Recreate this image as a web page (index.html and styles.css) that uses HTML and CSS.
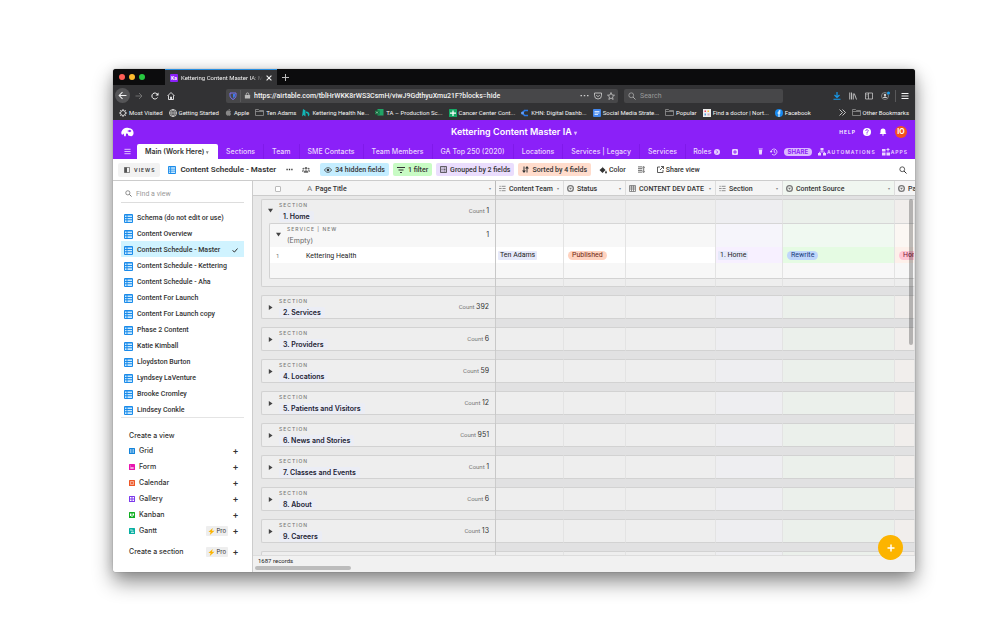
FILE: index.html
```html
<!DOCTYPE html>
<html lang="en">
<head>
<meta charset="utf-8">
<title>Kettering Content Master IA</title>
<link rel="stylesheet" href="styles.css">
</head>
<body>
<svg class="defs" aria-hidden="true">
<symbol id="grid" viewBox="0 0 18 18"><rect width="18" height="18" rx="2" fill="#1b8bea"/><path d="M2 3h3v3H2zM7 3h9v3H7zM2 8h3v2.500H2zM7 8h9v2.500H7zM2 12.500h3V16H2zM7 12.500h9V16H7z" fill="#c9eaff"/></symbol>
<symbol id="search" viewBox="0 0 16 16"><circle cx="6.500" cy="6.500" r="4.800" fill="none" stroke="currentColor" stroke-width="1.600"/><path d="M10 10l5 5" stroke="currentColor" stroke-width="2"/></symbol>
<symbol id="lines" viewBox="0 0 16 14"><path d="M1 2h3M6 2h9M0 7h6M8 7h7M1 12h3M6 12h9" stroke="currentColor" stroke-width="1.800"/></symbol>
<symbol id="select" viewBox="0 0 16 16"><circle cx="8" cy="8" r="6.500" fill="none" stroke="currentColor" stroke-width="3"/><path d="M4.500 6.500h7L8 11z" fill="currentColor"/></symbol>
<symbol id="folder" viewBox="0 0 18 16"><path d="M1 14V2h6l2 2h8v10zM1 6h16" fill="none" stroke="currentColor" stroke-width="1.500"/></symbol>
<symbol id="menu" viewBox="0 0 16 16"><path d="M1 3h14M1 8h14M1 13h14" stroke="currentColor" stroke-width="2"/></symbol>
<symbol id="right" viewBox="0 0 10 12"><path d="M1 0l9 6-9 6z" fill="currentColor"/></symbol>
<symbol id="down" viewBox="0 0 12 10"><path d="M0 1h12L6 10z" fill="currentColor"/></symbol>
<symbol id="bolt" viewBox="0 0 16 16"><path d="M11 0L1 9h5l-2 7L15 6H9z" fill="#fcb400"/></symbol>
</svg>
<div class="window">
  <header class="chrome">
    <div class="tabstrip">
      <div class="lights"><i class="red"></i><i class="yellow"></i><i class="green"></i></div>
      <div class="browser-tab"><b class="favicon">Ka</b><span class="tab-title">Kettering Content Master IA: M</span><button aria-label="Close tab"><svg viewBox="0 0 10 10" class="s6"><path d="M1 1l8 8M9 1L1 9" stroke="currentColor" stroke-width="1.800"/></svg></button></div>
      <button class="newtab" aria-label="New tab"><svg viewBox="0 0 10 10" class="s7"><path d="M5 0v10M0 5h10" stroke="currentColor" stroke-width="1.500"/></svg></button>
    </div>
    <div class="navbar">
      <div class="navbuttons">
        <button class="back" aria-label="Back"><svg class="s9" viewBox="0 0 16 16"><path d="M15 8H2M8 2L2 8l6 6" fill="none" stroke="currentColor" stroke-width="1.800"/></svg></button>
        <button class="dim" aria-label="Forward"><svg class="s8" viewBox="0 0 16 16"><path d="M1 8h13M8 2l6 6-6 6" fill="none" stroke="currentColor" stroke-width="1.800"/></svg></button>
        <button aria-label="Reload"><svg class="s8" viewBox="0 0 16 16"><path d="M13 11a6 6 0 1 1 0-6" fill="none" stroke="currentColor" stroke-width="2"/><path d="M15 1v6H9z" fill="currentColor"/></svg></button>
        <button aria-label="Home"><svg class="s8" viewBox="0 0 16 16"><path d="M1 8l7-7 7 7M3 7v8h10V7M7 15v-5h2v5" fill="none" stroke="currentColor" stroke-width="1.700"/></svg></button>
      </div>
      <div class="urlbar">
        <svg class="s8" viewBox="0 0 16 16"><path d="M2 2h12v5c0 4-3 6-6 8-3-2-6-4-6-8z" fill="none" stroke="#7a72f5" stroke-width="2"/><path d="M8 4h4v3c0 3-2 4-4 5z" fill="#3b7de8"/></svg>
        <i class="vr"></i>
        <svg class="s7" viewBox="0 0 14 16"><rect x="1" y="7" width="12" height="8" rx="1" fill="#bbb"/><path d="M4 7V5a3 3 0 0 1 6 0v2" fill="none" stroke="#bbb" stroke-width="2"/></svg>
        <input aria-label="Address" value="https://airtable.com/tblHrWKK8rWS3CsmH/viwJ9GdthyuXmu21F?blocks=hide">
        <svg class="s9" viewBox="0 0 18 18"><path d="M1 9h3M7.500 9h3M14 9h3" stroke="#ccc" stroke-width="2.500"/></svg>
        <svg class="s8" viewBox="0 0 16 16"><path d="M1 2h14v5a7 7 0 0 1-14 0zM4.500 6L8 9.500 11.500 6" fill="none" stroke="#ccc" stroke-width="1.700"/></svg>
        <svg class="s8" viewBox="0 0 16 16"><path d="M8 1l2 5 5 .4-4 3.300 1.300 5.300L8 12l-4.300 3L5 9.700 1 6.400 6 6z" fill="none" stroke="#ccc" stroke-width="1.500"/></svg>
      </div>
      <div class="searchbar"><svg class="s8"><use href="#search"/></svg><input aria-label="Web search" placeholder="Search"></div>
      <div class="navright">
        <svg class="s8" viewBox="0 0 16 16"><path d="M8 0v10M3 6l5 5 5-5M1 14.500h14" fill="none" stroke="#169bed" stroke-width="2.400"/></svg>
        <svg class="s8" viewBox="0 0 16 16"><path d="M1.500 1v14M5 1v14M8.500 3v12M10.500 3l4.500 12" stroke="#ccc" stroke-width="1.800"/></svg>
        <svg class="s8" viewBox="0 0 16 16"><path d="M1 2h14v12H1zM7 2v12M3 5h2M3 8h2" fill="none" stroke="#ccc" stroke-width="1.500"/></svg>
        <svg class="s9" viewBox="0 0 18 18"><circle cx="8" cy="10" r="7" fill="none" stroke="#999" stroke-width="1.500"/><circle cx="8" cy="8" r="2.500" fill="#ccc"/><path d="M3.500 14c2-4 7-4 9 0" fill="#ccc"/><circle cx="15" cy="4" r="3" fill="#169bed"/></svg>
        <i class="vr"></i>
        <svg class="s8"><use href="#menu"/></svg>
      </div>
    </div>
    <nav class="bookmarks">
      <a href="#"><svg class="s8" viewBox="0 0 16 16"><circle cx="8" cy="8" r="5" fill="none" stroke="currentColor" stroke-width="1.600"/><path d="M8 0v3M8 13v3M0 8h3M13 8h3M2.500 2.500l2 2M11.500 11.500l2 2M2.500 13.500l2-2M11.500 4.500l2-2" stroke="currentColor" stroke-width="1.600"/></svg>Most Visited</a>
      <a href="#"><svg class="s8" viewBox="0 0 16 16"><circle cx="8" cy="8" r="7" fill="none" stroke="currentColor" stroke-width="1.500"/><path d="M8 1v14M1 8h14M8 1c-5 4-5 10 0 14M8 1c5 4 5 10 0 14" fill="none" stroke="currentColor"/></svg>Getting Started</a>
      <a href="#"><svg class="s7" viewBox="0 0 16 16"><path d="M8 4c2-1 4-1 6 1-3 2-2 5 0 6-2 5-3 5-6 4-3 1-7-2-6-7 1-4 4-5 6-4zM8 3c0-2 1-3 3-3 0 2-1 3-3 3z" fill="#888"/></svg>Apple</a>
      <a href="#"><svg class="s9 grey"><use href="#folder"/></svg>Ten Adams</a>
      <a href="#"><svg class="s8" viewBox="0 0 16 16"><path d="M2 0l5 3v12l-4-3-3 3zM8 5c5 0 7 3 7 7l-3 3c0-5-1-7-4-7z" fill="#12b5b5"/></svg>Kettering Health Ne...</a>
      <a href="#"><svg class="s9" viewBox="0 0 18 16"><path d="M5 1h12v13H5z" fill="#21a366"/><path d="M0 4h9v8H0z" fill="#0e6b3a"/><path d="M2 6l4 4M6 6l-4 4" stroke="#fff"/></svg>TA – Production Sc...</a>
      <a href="#"><svg class="s8" viewBox="0 0 16 16"><rect width="16" height="16" rx="1" fill="#16a765"/><path d="M2 8h12M8 3v11" stroke="#fff" stroke-width="2.500"/></svg>Cancer Center Cont...</a>
      <a href="#"><svg class="s8" viewBox="0 0 16 16"><path d="M14 3H7L3 8l4 5h7" fill="none" stroke="#2878e8" stroke-width="3"/><circle cx="3" cy="8" r="3" fill="#639df6"/></svg>KHN: Digital Dashb...</a>
      <a href="#"><svg class="s8" viewBox="0 0 16 16"><rect width="16" height="16" rx="2" fill="#4387ed"/><path d="M3 5h10M3 8h10M3 11h7" stroke="#fff" stroke-width="1.500"/></svg>Social Media Strate...</a>
      <a href="#"><svg class="s9 grey"><use href="#folder"/></svg>Popular</a>
      <a href="#"><svg class="s8" viewBox="0 0 16 16"><path d="M0 0h16v16H0z" fill="#eee"/><path d="M3 3h3v3H3z" fill="#e46"/><path d="M9 3h3v3H9z" fill="#fb3"/><path d="M3 9h3v4H3z" fill="#59d"/><path d="M9 9h4v4H9z" fill="#cab"/></svg>Find a doctor | Nort...</a>
      <a href="#"><svg class="s8" viewBox="0 0 16 16"><circle cx="8" cy="8" r="8" fill="#1788ee"/><path d="M7 16V9H5V7h2V5c0-2 2-3 4-2v2c-1 0-2 0-2 1v1h2l-.5 2H9v7z" fill="#fff"/></svg>Facebook</a>
      <span class="grow"></span>
      <svg class="s7" viewBox="0 0 14 14"><path d="M1 1l6 6-6 6M7 1l6 6-6 6" fill="none" stroke="currentColor" stroke-width="1.500"/></svg>
      <a href="#"><svg class="s9 grey"><use href="#folder"/></svg>Other Bookmarks</a>
    </nav>
  </header>

  <div class="base">
    <div class="basetop">
      <svg class="logo" viewBox="0 0 36 28"><path d="M1 13C5 4 13 0 21 3c9 1 14 6 14 14 0 5-3 9-7 9l-8-2-1-5-5-1-1 8H9l-2-8-3 4c-3-1-4-5-3-9z" fill="#fff"/><path d="M17 11l8-3 4 3-4 4z" fill="#8b20f8"/></svg>
      <h1>Kettering Content Master IA <small>▾</small></h1>
      <div class="account"><span class="help">HELP</span>
        <svg class="s8" viewBox="0 0 16 16"><circle cx="8" cy="8" r="8" fill="#fff"/><path d="M5.500 6c0-4 5-3 5-.5C10.500 7.500 8 7 8 10M8 11v2" fill="none" stroke="#8b20f8" stroke-width="1.800"/></svg>
        <svg class="s8" viewBox="0 0 16 16"><path d="M1 12c2-1 2-3 2-6a5 5 0 0 1 10 0c0 3 0 5 2 6zM6 13h4c0 3-4 3-4 0z" fill="#fff"/></svg>
        <span class="avatar">IO</span></div>
    </div>
    <nav class="tables">
      <button class="tmenu" aria-label="All tables"><svg class="s7"><use href="#menu"/></svg></button>
      <a href="#" class="active">Main (Work Here) <small>▾</small></a>
      <a href="#">Sections</a><a href="#">Team</a><a href="#">SME Contacts</a><a href="#">Team Members</a><a href="#">GA Top 250 (2020)</a><a href="#">Locations</a><a href="#">Services | Legacy</a><a href="#">Services</a><a href="#" class="roles">Roles <svg class="s6" viewBox="0 0 16 16"><circle cx="8" cy="8" r="8" fill="#e6cdff"/><path d="M6 4l4 4-4 4" stroke="#8b20f8" stroke-width="2" fill="none"/></svg></a>
      <button class="addtable" aria-label="Add table"><svg class="s6" viewBox="0 0 16 16"><rect width="16" height="16" rx="3" fill="#e9d2ff"/><path d="M8 3v10M3 8h10" stroke="#8b20f8" stroke-width="2.500"/></svg></button>
      <span class="grow"></span>
      <div class="actions">
        <button aria-label="Trash"><svg class="s7" viewBox="0 0 16 16"><path d="M3 1h10v2H3zM4 4h8l-1 11H5z" fill="currentColor"/></svg></button>
        <button aria-label="History"><svg class="s8" viewBox="0 0 16 16"><path d="M2 8a6 6 0 1 1 2 4.500M8.500 4v4.500l3 2" fill="none" stroke="currentColor" stroke-width="1.700"/><path d="M0 6h5L2 10z" fill="currentColor"/></svg></button>
        <button class="share">SHARE</button>
        <button class="caps"><svg class="s8" viewBox="0 0 16 16"><path d="M5 0h6v5H5zM0 10h6v5H0zM10 10h6v5h-6z" fill="currentColor"/><path d="M8 5v3M3 11V8h10v3" fill="none" stroke="currentColor" stroke-width="1.500"/></svg>AUTOMATIONS</button>
        <button class="caps apps"><svg class="s8" viewBox="0 0 16 16"><path d="M0 2h7v5H0zM0 9h7v6H0zM9 9h7v6H9zM11 0h2v2h2v2h-2v3h-2V4H9V2h2z" fill="currentColor"/></svg>APPS</button>
      </div>
    </nav>
  </div>

  <div class="viewbar">
    <button class="views"><svg class="s6" viewBox="0 0 14 14"><path d="M1 1h12v12H1z" fill="none" stroke="#555" stroke-width="1.600"/><path d="M1 1h6v12H1z" fill="#555"/></svg>VIEWS</button>
    <button class="viewname"><svg class="s8"><use href="#grid"/></svg>Content Schedule - Master</button>
    <button class="more" aria-label="View options"><svg class="s7" viewBox="0 0 16 16"><path d="M1 8h3M6.500 8h3M12 8h3" stroke="currentColor" stroke-width="3"/></svg></button>
    <button class="people" aria-label="Collaborators"><svg class="s8" viewBox="0 0 18 16"><circle cx="9" cy="4" r="3" fill="#666"/><circle cx="3" cy="5" r="2" fill="#666"/><circle cx="15" cy="5" r="2" fill="#666"/><path d="M4 14c0-7 10-7 10 0zM0 12c0-4 3-5 4-3l-1 3zM18 12c0-4-3-5-4-3l1 3z" fill="#666"/></svg></button>
    <button class="pill hidden"><svg class="s8" viewBox="0 0 18 14"><path d="M1 7c4-7 12-7 16 0-4 7-12 7-16 0z" fill="none" stroke="currentColor" stroke-width="1.600"/><circle cx="9" cy="7" r="3" fill="currentColor"/></svg>34 hidden fields</button>
    <button class="pill filter"><svg class="s8" viewBox="0 0 16 16"><path d="M0 3h16M3 8h10M6 13h4" stroke="currentColor" stroke-width="2"/></svg>1 filter</button>
    <button class="pill grouped"><svg class="s7" viewBox="0 0 14 14"><path d="M1 1h12v12H1zM3 4h2M7 4h4M3 7h2M7 7h4M3 10h2M7 10h4" fill="none" stroke="currentColor" stroke-width="1.500"/></svg>Grouped by 2 fields</button>
    <button class="pill sorted"><svg class="s7" viewBox="0 0 14 14"><path d="M4 1v11M10 13V2" stroke="currentColor" stroke-width="2"/><path d="M0 9h8l-4 5zM6 5h8l-4-5z" fill="currentColor"/></svg>Sorted by 4 fields</button>
    <button class="plain"><svg class="s8" viewBox="0 0 16 16"><path d="M6 1l7 7-6 6-6-6 6-5zM14 9c2 3 3 6 0 6s-2-3 0-6z" fill="currentColor"/></svg>Color</button>
    <button class="plain" aria-label="Row height"><svg class="s7" viewBox="0 0 16 16"><path d="M0 2h10M0 6h10M0 10h10M0 14h10M13 3v10M11 4l2-3 2 3M11 12l2 3 2-3" stroke="currentColor" stroke-width="1.600" fill="none"/></svg></button>
    <button class="plain"><svg class="s7" viewBox="0 0 14 14"><path d="M6 2H1v11h11V8M8 1h5v5M13 1L6 8" fill="none" stroke="currentColor" stroke-width="1.600"/></svg>Share view</button>
    <span class="grow"></span>
    <button aria-label="Find"><svg class="s8"><use href="#search"/></svg></button>
  </div>

  <main class="body">
    <aside class="sidebar">
      <label class="find"><svg class="s7"><use href="#search"/></svg><input placeholder="Find a view" aria-label="Find a view"></label>
      <nav class="viewlist">
        <a href="#"><svg><use href="#grid"/></svg>Schema (do not edit or use)</a>
        <a href="#"><svg><use href="#grid"/></svg>Content Overview</a>
        <a href="#" class="on"><svg><use href="#grid"/></svg>Content Schedule - Master<svg class="check" viewBox="0 0 12 10"><path d="M1 5l4 3 6-7" fill="none" stroke="#333" stroke-width="2"/></svg></a>
        <a href="#"><svg><use href="#grid"/></svg>Content Schedule - Kettering</a>
        <a href="#"><svg><use href="#grid"/></svg>Content Schedule - Aha</a>
        <a href="#"><svg><use href="#grid"/></svg>Content For Launch</a>
        <a href="#"><svg><use href="#grid"/></svg>Content For Launch copy</a>
        <a href="#"><svg><use href="#grid"/></svg>Phase 2 Content</a>
        <a href="#"><svg><use href="#grid"/></svg>Katie Kimball</a>
        <a href="#"><svg><use href="#grid"/></svg>Lloydston Burton</a>
        <a href="#"><svg><use href="#grid"/></svg>Lyndsey LaVenture</a>
        <a href="#"><svg><use href="#grid"/></svg>Brooke Cromley</a>
        <a href="#"><svg><use href="#grid"/></svg>Lindsey Conkle</a>
      </nav>
      <div class="create">
        <h2>Create a view</h2>
        <button><svg class="s6" viewBox="0 0 12 12"><rect width="12" height="12" rx="1" fill="#1283da"/><path d="M2 3h3v2H2zM7 3h3v2H7zM2 7h3v2H2zM7 7h3v2H7z" fill="#fff"/></svg><span>Grid</span><b>+</b></button>
        <button><svg class="s6" viewBox="0 0 12 12"><rect width="12" height="12" rx="1" fill="#e814b0"/><path d="M2 4h2M3 7.500h6v1H3z" fill="#fff" stroke="#fff"/></svg><span>Form</span><b>+</b></button>
        <button><svg class="s6" viewBox="0 0 12 12"><rect width="12" height="12" rx="1" fill="#ee5524"/><path d="M3 3h6v6H3zM5 6h2" fill="none" stroke="#fff"/></svg><span>Calendar</span><b>+</b></button>
        <button><svg class="s6" viewBox="0 0 12 12"><rect width="12" height="12" rx="1" fill="#7c39ed"/><path d="M2 2h3v3H2zM7 2h3v3H7zM2 7h3v3H2zM7 7h3v3H7z" fill="#fff"/></svg><span>Gallery</span><b>+</b></button>
        <button><svg class="s6" viewBox="0 0 12 12"><rect width="12" height="12" rx="1" fill="#11af22"/><path d="M2 3h2v5H2zM5 3h2v7H5zM8 3h2v4H8z" fill="#fff"/></svg><span>Kanban</span><b>+</b></button>
        <button><svg class="s6" viewBox="0 0 12 12"><rect width="12" height="12" rx="1" fill="#08afa2"/><path d="M2 4h5M5 6h4M4 9h6" stroke="#fff" stroke-width="1.400"/></svg><span>Gantt</span><em><svg class="s7"><use href="#bolt"/></svg>Pro</em><b>+</b></button>
        <button class="section"><span>Create a section</span><em><svg class="s7"><use href="#bolt"/></svg>Pro</em><b>+</b></button>
      </div>
    </aside>

    <section class="gridpane">
      <div class="rows">
      <table>
        <thead><tr>
          <th class="first"><input type="checkbox" aria-label="Select all"><span class="letter">A</span><span>Page Title</span><i>▾</i></th>
          <th><svg class="s7"><use href="#lines"/></svg><span>Content Team</span><i>▾</i></th>
          <th><svg class="s7"><use href="#select"/></svg><span>Status</span><i>▾</i></th>
          <th><svg class="s7" viewBox="0 0 14 14"><path d="M1 1h12v12H1zM1 4h12M1 8h12M5 1v12M9 1v12" fill="none" stroke="currentColor" stroke-width="1.600"/></svg><span>CONTENT DEV DATE</span><i>▾</i></th>
          <th><svg class="s7"><use href="#lines"/></svg><span>Section</span><i>▾</i></th>
          <th><svg class="s7"><use href="#select"/></svg><span>Content Source</span><i>▾</i></th>
          <th class="cut"><svg class="s7"><use href="#select"/></svg><span>Pa</span></th>
        </tr></thead>
        <tbody>
          <tr class="gap small"><td></td><td colspan="6"></td></tr>
          <tr class="group open"><td><div class="box"><svg class="caret"><use href="#down"/></svg><div class="label"><small>SECTION</small><b>1. Home</b></div><span class="count">Count <b>1</b></span></div></td><td></td><td></td><td></td><td></td><td></td><td></td></tr>
          <tr class="sub"><td><div class="outer"><div class="inner top"><svg class="caret"><use href="#down"/></svg><div class="label"><small>SERVICE | NEW</small><span>(Empty)</span></div><span class="count"><b>1</b></span></div></div></td><td></td><td></td><td></td><td></td><td></td><td></td></tr>
          <tr class="record"><td><div class="outer"><div class="inner"><span class="num">1</span><span>Kettering Health</span></div></div></td><td><span class="tag link">Ten Adams</span></td><td><span class="tag orange">Published</span></td><td></td><td><span class="tag link">1. Home</span></td><td><span class="tag blue">Rewrite</span></td><td><span class="tag pink">Home</span></td></tr>
          <tr class="blank"><td><div class="outer"><div class="inner bottom"></div></div></td><td></td><td></td><td></td><td></td><td></td><td></td></tr>
          <tr class="end"><td><div class="outer last"></div></td><td></td><td></td><td></td><td></td><td></td><td></td></tr>
          <tr class="gap"><td></td><td colspan="6"></td></tr>
        </tbody>
        <tbody><tr class="group"><td><div class="box"><svg class="caret"><use href="#right"/></svg><div class="label"><small>SECTION</small><b>2. Services</b></div><span class="count">Count <b>392</b></span></div></td><td></td><td></td><td></td><td></td><td></td><td></td></tr><tr class="gap"><td></td><td colspan="6"></td></tr></tbody>
        <tbody><tr class="group"><td><div class="box"><svg class="caret"><use href="#right"/></svg><div class="label"><small>SECTION</small><b>3. Providers</b></div><span class="count">Count <b>6</b></span></div></td><td></td><td></td><td></td><td></td><td></td><td></td></tr><tr class="gap"><td></td><td colspan="6"></td></tr></tbody>
        <tbody><tr class="group"><td><div class="box"><svg class="caret"><use href="#right"/></svg><div class="label"><small>SECTION</small><b>4. Locations</b></div><span class="count">Count <b>59</b></span></div></td><td></td><td></td><td></td><td></td><td></td><td></td></tr><tr class="gap"><td></td><td colspan="6"></td></tr></tbody>
        <tbody><tr class="group"><td><div class="box"><svg class="caret"><use href="#right"/></svg><div class="label"><small>SECTION</small><b>5. Patients and Visitors</b></div><span class="count">Count <b>12</b></span></div></td><td></td><td></td><td></td><td></td><td></td><td></td></tr><tr class="gap"><td></td><td colspan="6"></td></tr></tbody>
        <tbody><tr class="group"><td><div class="box"><svg class="caret"><use href="#right"/></svg><div class="label"><small>SECTION</small><b>6. News and Stories</b></div><span class="count">Count <b>951</b></span></div></td><td></td><td></td><td></td><td></td><td></td><td></td></tr><tr class="gap"><td></td><td colspan="6"></td></tr></tbody>
        <tbody><tr class="group"><td><div class="box"><svg class="caret"><use href="#right"/></svg><div class="label"><small>SECTION</small><b>7. Classes and Events</b></div><span class="count">Count <b>1</b></span></div></td><td></td><td></td><td></td><td></td><td></td><td></td></tr><tr class="gap"><td></td><td colspan="6"></td></tr></tbody>
        <tbody><tr class="group"><td><div class="box"><svg class="caret"><use href="#right"/></svg><div class="label"><small>SECTION</small><b>8. About</b></div><span class="count">Count <b>6</b></span></div></td><td></td><td></td><td></td><td></td><td></td><td></td></tr><tr class="gap"><td></td><td colspan="6"></td></tr></tbody>
        <tbody><tr class="group"><td><div class="box"><svg class="caret"><use href="#right"/></svg><div class="label"><small>SECTION</small><b>9. Careers</b></div><span class="count">Count <b>13</b></span></div></td><td></td><td></td><td></td><td></td><td></td><td></td></tr><tr class="gap"><td></td><td colspan="6"></td></tr></tbody>
        <tbody><tr class="group"><td><div class="box"><div class="label indent"><small>SECTION</small></div></div></td><td></td><td></td><td></td><td></td><td></td><td></td></tr></tbody>
      </table>
      <i class="vscroll"></i>
      </div>
      <footer><span>1687 records</span><i class="hscroll"></i></footer>
      <button class="fab" aria-label="Add record"><svg class="s8" viewBox="0 0 16 16"><path d="M8 1v14M1 8h14" stroke="#fff" stroke-width="3"/></svg></button>
    </section>
  </main>
</div>
</body>
</html>
```

FILE: styles.css
```css
* { box-sizing: border-box; }
body { margin: 0; min-height: 100vh; padding: 69px 85px 68px 113px; background: #fff; display: flex; font: 400 7px/10px Roboto, sans-serif; color: #222; }
button, input { font: inherit; color: inherit; border: 0; background: none; padding: 0; margin: 0; }
button { display: flex; align-items: center; white-space: nowrap; }
a { color: inherit; text-decoration: none; white-space: nowrap; }
svg { flex: none; display: block; }
.defs { position: absolute; width: 0; height: 0; }
.s6 { width: 6px; height: 6px; } .s7 { width: 7px; height: 7px; } .s8 { width: 8px; height: 8px; } .s9 { width: 9px; height: 9px; }
.grow { flex: 1; }
.window { flex: 1; min-width: 0; display: flex; flex-direction: column; border-radius: 3px; overflow: hidden; box-shadow: 0 10px 20px rgba(0,0,0,.45), 0 0 12px rgba(0,0,0,.12), 0 0 1px rgba(0,0,0,.5); }

.chrome { background: #323234; color: #f4f4f4; }
.tabstrip { background: #0c0c0d; height: 16px; display: flex; align-items: center; }
.lights { display: flex; gap: 4px; width: 52px; padding-left: 6px; }
.lights i { width: 6px; height: 6px; border-radius: 50%; }
.red { background: #ff5f57; } .yellow { background: #febc2e; } .green { background: #28c840; }
.browser-tab { width: 112px; height: 16px; background: #323234; border-top: 1px solid #2a8fe0; display: flex; align-items: center; padding: 0 5px; gap: 3px; font-size: 6px; }
.favicon { width: 8px; height: 8px; background: #8b20f8; color: #fff; font-size: 5px; line-height: 8px; text-align: center; border-radius: 1px; }
.tab-title { flex: 1; min-width: 0; overflow: hidden; white-space: nowrap; mask-image: linear-gradient(90deg, #000 85%, transparent); }
.newtab { padding-left: 5px; color: #bbb; }
.navbar { display: flex; align-items: center; height: 20px; padding-top: 1px; }
.navbuttons { width: 113px; padding-left: 2px; display: flex; align-items: center; gap: 8px; }
.back { width: 15px; height: 15px; border-radius: 50%; background: #555557; justify-content: center; margin-right: -3px; }
.dim { color: #777; }
.urlbar, .searchbar { background: #474749; height: 14px; border-radius: 2px; display: flex; align-items: center; }
.urlbar { flex: 1; padding: 0 3px; gap: 5px; }
.urlbar .vr { margin: 0 -2px; }
.urlbar input { flex: 1; min-width: 0; color: #f4f4f4; margin-left: -2px; font-weight: 500; }
.vr { width: 1px; height: 12px; background: #59595b; }
.searchbar { width: 159px; margin-left: 6px; padding: 0 4px; gap: 4px; color: #aaa; }
.searchbar input { width: 100%; }
input::placeholder { color: #999; opacity: 1; }
.navright { display: flex; align-items: center; gap: 8px; width: 132px; justify-content: flex-end; padding-right: 6px; }
.navright .vr { margin: 0 -3px; }
.bookmarks { height: 15px; display: flex; align-items: center; font-size: 6px; padding: 0 6px; gap: 6px; }
.bookmarks a { display: flex; align-items: center; gap: 2px; }
.grey { color: #999; }

.base { background: #8b20f8; color: #fff; font-family: Inter, sans-serif; font-weight: 500; }
.basetop { height: 24px; display: grid; grid-template-columns: 1fr auto 1fr; align-items: center; padding: 0 8px; }
.logo { width: 13px; height: 10px; }
h1 { font-size: 9px; line-height: 12px; font-weight: 600; margin: 0; }
h1 small { font-size: 6px; opacity: .7; }
.account { justify-self: end; display: flex; align-items: center; gap: 8px; }
.help { font-size: 5px; font-weight: 600; letter-spacing: 1px; margin-right: -1px; }
.avatar { width: 12px; height: 12px; border-radius: 50%; background: #f4511e; line-height: 12px; text-align: center; font-weight: 700; }
.tables { display: flex; align-items: stretch; height: 15px; color: #ead5ff; }
.tables button { justify-content: center; }
.tmenu { width: 24px; padding-left: 4px; }
.tables > a { padding: 0 8px; line-height: 15px; border-right: 1px solid #8019ea; }
.tables .active { background: #fff; color: #333; border-radius: 2px 2px 0 0; font-weight: 600; border: 0; padding-right: 9px; }
.tables .roles { display: flex; align-items: center; gap: 3px; border: 0; padding-left: 7px; }
.tables small { font-size: 5px; opacity: .6; }
.addtable { margin-left: 4px; }
.actions { display: flex; align-items: center; gap: 6px; padding-right: 7px; }
.share { background: #dcb8ff; color: #8b20f8; border-radius: 4px; height: 8px; padding: 0 4px; font-weight: 700; font-size: 6px; }
.caps { gap: 1px; letter-spacing: 1px; font-size: 5px; font-weight: 600; }

.viewbar { height: 21px; background: #fff; display: flex; align-items: center; padding: 0 8px 0 5px; font-weight: 500; color: #333; }
.views { background: #f2f2f2; border-radius: 2px; height: 14px; padding: 0 5px 0 6px; gap: 4px; font: 600 5px/10px Inter, sans-serif; letter-spacing: 1px; }
.viewname { margin-left: 8px; gap: 4px; font-size: 8px; font-weight: 600; }
.more { margin-left: 10px; } .people { margin: 0 10px 0 9px; }
.pill { height: 13px; border-radius: 2px; padding: 0 4px; gap: 3px; margin-right: 4px; }
.hidden { background: #c4edff; } .filter { background: #c8fbc4; } .grouped { background: #eaddfd; } .sorted { background: #ffdccc; }
.plain { gap: 2px; margin-left: 4px; margin-right: 8px; }

.body { flex: 1; display: flex; min-height: 0; border-top: 1px solid #ccc; }
.sidebar { width: 140px; background: #fff; border-right: 1px solid #ccc; padding: 4px 8px 0; }
.find { display: flex; align-items: center; height: 18px; gap: 4px; padding-left: 4px; border-bottom: 1px solid #ddd; color: #666; }
.find input { width: 100%; }
.viewlist { padding: 6px 0 0; border-bottom: 1px solid #e4e4e4; font-weight: 500; color: #333; }
.viewlist a { display: flex; align-items: center; height: 16px; padding: 2px 0 0 3px; gap: 4px; }
.viewlist svg { width: 9px; height: 9px; }
.viewlist .check { width: 6px; height: 5px; margin-left: auto; margin-right: 6px; }
.viewlist .on { background: #d0f3ff; }
.create { padding: 10px 5px 0 8px; font-family: Inter, sans-serif; color: #333; }
h2 { font-size: 7px; line-height: 15px; margin: 0; font-weight: 500; }
.create button { width: 100%; height: 16px; gap: 4px; font-weight: 500; }
.create button span { flex: 1; text-align: left; }
.create b { font-size: 9px; width: 7px; text-align: center; font-weight: 600; }
.create em { font-style: normal; font-size: 6px; font-weight: 400; background: #eee; border-radius: 1px; padding: 0 2px; display: flex; align-items: center; gap: 1px; }
.create .section { margin-top: 5px; }

.gridpane { flex: 1; min-width: 0; display: flex; flex-direction: column; background: #e8e8e8; position: relative; }
.rows { flex: 1 1 0; min-height: 0; overflow: hidden; position: relative; }
table, thead, tbody { display: block; }
tr { display: grid; grid-template-columns: 243px 68px 62px 90px 67px 112px minmax(19px, 1fr); }
td, th { display: block; padding: 0; min-width: 0; overflow: hidden; }
th { display: flex; align-items: center; gap: 3px; height: 15px; padding: 1px 4px 0 3px; background: #f5f5f5; border-right: 1px solid #ddd; border-bottom: 1px solid #ccc; font-weight: 500; text-align: left; white-space: nowrap; color: #333; }
th:nth-child(6) { background: #f0f6f0; }
th span { flex: none; }
th i { margin-left: auto; font-style: normal; font-size: 4px; color: #888; }
th svg { color: #777; }
.cut { padding-right: 0; border-right: 0; }
.first { padding-left: 22px; border-right-color: #bbb; }
.first input { appearance: none; width: 6px; height: 6px; border: 1px solid #bbb; border-radius: 1px; background: #fff; margin-right: 23px; }
th .letter { color: #777; font-size: 8px; font-weight: 400; }
td { border-right: 1px solid #e3e3e3; }
td:first-child { background: #e8e8e8; padding-left: 8px; border-right-color: #c8c8c8; }
.gap td { height: 8px; background: #e1e1e2; border: 0; }
.gap td:first-child { background: #e8e8e8; border-right: 1px solid #ccc; }
.gap td:last-child { grid-column: 2 / -1; }
.gap.small td { height: 3px; }
.group td { height: 24px; background: #eee; border-top: 1px solid #d2d2d2; border-bottom: 1px solid #d2d2d2; }
.group td:first-child { background: #e8e8e8; border-top: 0; border-bottom: 0; }
.group td:nth-child(5) { background: #eeeef1; } .group td:nth-child(6) { background: #ebf0eb; } .group td:nth-child(7) { background: #f1eeec; }
.box { height: 24px; background: #eee; border: 1px solid #d2d2d2; border-right: 0; border-radius: 2px 0 0 2px; display: flex; align-items: center; padding: 0 6px; }
.open .box { border-bottom: 0; border-radius: 2px 0 0 0; padding-bottom: 2px; }
.open td { border-bottom: 0; }
.caret { width: 5px; height: 5px; color: #444; margin-right: 6px; }
.label { flex: 1; display: flex; flex-direction: column; align-items: flex-start; font-family: Inter, sans-serif; }
.label small { font-size: 5px; line-height: 11px; letter-spacing: 1px; color: #777; font-weight: 500; }
.label b { font-weight: 600; line-height: 11px; padding: 0 4px; color: #223; background: #ebedf5; border-radius: 2px; }
.indent { padding-left: 11px; align-self: flex-start; }
.count { font-size: 6px; color: #777; }
.count b { font-size: 7px; color: #333; font-weight: 400; font-family: Inter, sans-serif; }
.outer { height: 100%; padding-left: 7px; background: #eee; border-left: 1px solid #d2d2d2; }
.inner { height: 100%; background: #f7f7f7; border-left: 1px solid #d2d2d2; display: flex; align-items: center; padding: 0 6px; }
.sub .inner { border-top: 1px solid #d2d2d2; border-radius: 2px 0 0 0; padding-bottom: 2px; }
.sub .label span { line-height: 11px; color: #666; }
.sub td { height: 24px; background: #f7f7f7; border-top: 1px solid #d6d6d6; }
.sub td:first-child, .blank td:first-child, .end td:first-child { border-top: 0; border-bottom: 0; background: #e8e8e8; }
.sub td:nth-child(5) { background: #f6f5fb; } .sub td:nth-child(6) { background: #f0f9f1; } .sub td:nth-child(7) { background: #fbf7f3; }
.record td { height: 16px; background: #fff; line-height: 16px; padding-left: 2px; white-space: nowrap; }
.record td:first-child { background: #e8e8e8; padding-left: 8px; }
.record .inner { background: #fff; padding-top: 1px; }
.record td:nth-child(5) { background: #f7f0ff; } .record td:nth-child(6) { background: #e5fbe3; } .record td:nth-child(7) { background: #fdf0ea; }
.num { width: 30px; color: #777; font-size: 6px; }
.tag { display: inline-block; line-height: 9px; height: 9px; padding: 0 4px; margin-left: 2px; border-radius: 5px; }
.link { background: #e6e9fa; border-radius: 1px; padding: 0 2px; margin-left: 0; }
.orange { background: #ffd2bf; color: #702a14; } .blue { background: #bfd6fb; color: #163a78; } .pink { background: #ffc5d4; color: #801437; }
.blank td { height: 16px; background: #f7f7f7; border-bottom: 1px solid #d2d2d2; }
.blank .inner { border-bottom: 1px solid #d2d2d2; border-radius: 0 0 0 2px; }
.end td { height: 8px; background: #eee; border-bottom: 1px solid #d2d2d2; }
.last { border-bottom: 1px solid #d2d2d2; border-radius: 0 0 0 2px; }
.vscroll { position: absolute; top: 18px; right: 2px; width: 4px; height: 146px; border-radius: 2px; background: rgba(0,0,0,.25); }
footer { height: 17px; background: #f1f1f1; border-top: 1px solid #ddd; padding: 0 2px 1px; font-size: 6px; }
footer span { display: block; padding-left: 3px; }
.hscroll { display: block; width: 96px; height: 4px; border-radius: 2px; background: #bcbcbc; }
.fab { position: absolute; right: 12px; bottom: 12px; width: 25px; height: 25px; border-radius: 50%; background: #fcb400; justify-content: center; }
```
